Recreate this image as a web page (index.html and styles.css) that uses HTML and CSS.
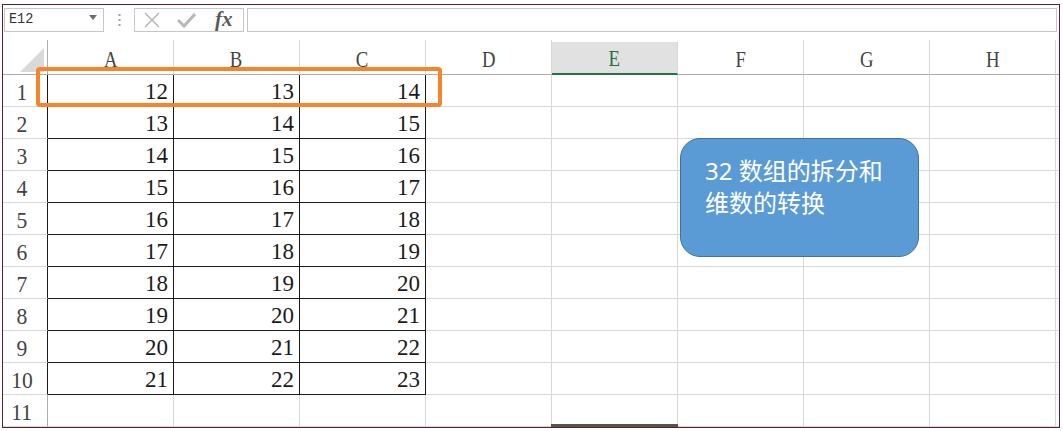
FILE: index.html
```html
<!DOCTYPE html>
<html>
<head>
<meta charset="utf-8">
<link rel="stylesheet" href="styles.css">
</head>
<body>
<div class="sheet">
  <div class="fbar">
    <div class="namebox"><span class="nametext">E12</span><svg class="arrow" width="8" height="5" viewBox="0 0 8 5"><path d="M0 0H8L4 5Z" fill="#6d6d6d"/></svg></div>
    <div class="sep"><svg width="3" height="12" viewBox="0 0 3 12"><rect x="0.5" y="0" width="2" height="2" fill="#a0a0a0"/><rect x="0.5" y="5" width="2" height="2" fill="#a0a0a0"/><rect x="0.5" y="10" width="2" height="2" fill="#a0a0a0"/></svg></div>
    <div class="btns">
      <svg width="18" height="18" viewBox="0 0 18 18"><path d="M2 2L16 16M16 2L2 16" stroke="#b8b8b8" stroke-width="1.6" fill="none"/></svg>
      <svg width="19" height="18" viewBox="0 0 19 18"><path d="M1 9L7 15L18 3" stroke="#b8b8b8" stroke-width="3" fill="none"/></svg>
      <span class="fx">fx</span>
    </div>
    <div class="finput"></div>
  </div>
  <div class="grid">
    <div class="hc corner"><svg width="26" height="26" viewBox="0 0 26 26"><path d="M25 1V25H1Z" fill="#d9d9d9"/></svg></div>
    <div class="hc"><span class="hl">A</span></div>
    <div class="hc"><span class="hl">B</span></div>
    <div class="hc"><span class="hl">C</span></div>
    <div class="hc"><span class="hl">D</span></div>
    <div class="hc sel"><span class="hl">E</span></div>
    <div class="hc"><span class="hl">F</span></div>
    <div class="hc"><span class="hl">G</span></div>
    <div class="hc"><span class="hl">H</span></div>
    <div class="hc fill"></div>

    <div class="rh b"><span class="rn">1</span></div><div class="c d">12</div><div class="c d">13</div><div class="c d">14</div><div class="c"></div><div class="c"></div><div class="c"></div><div class="c"></div><div class="c"></div><div class="c fill"></div>
    <div class="rh b"><span class="rn">2</span></div><div class="c d">13</div><div class="c d">14</div><div class="c d">15</div><div class="c"></div><div class="c"></div><div class="c"></div><div class="c"></div><div class="c"></div><div class="c fill"></div>
    <div class="rh b"><span class="rn">3</span></div><div class="c d">14</div><div class="c d">15</div><div class="c d">16</div><div class="c"></div><div class="c"></div><div class="c"></div><div class="c"></div><div class="c"></div><div class="c fill"></div>
    <div class="rh b"><span class="rn">4</span></div><div class="c d">15</div><div class="c d">16</div><div class="c d">17</div><div class="c"></div><div class="c"></div><div class="c"></div><div class="c"></div><div class="c"></div><div class="c fill"></div>
    <div class="rh b"><span class="rn">5</span></div><div class="c d">16</div><div class="c d">17</div><div class="c d">18</div><div class="c"></div><div class="c"></div><div class="c"></div><div class="c"></div><div class="c"></div><div class="c fill"></div>
    <div class="rh b"><span class="rn">6</span></div><div class="c d">17</div><div class="c d">18</div><div class="c d">19</div><div class="c"></div><div class="c"></div><div class="c"></div><div class="c"></div><div class="c"></div><div class="c fill"></div>
    <div class="rh b"><span class="rn">7</span></div><div class="c d">18</div><div class="c d">19</div><div class="c d">20</div><div class="c"></div><div class="c"></div><div class="c"></div><div class="c"></div><div class="c"></div><div class="c fill"></div>
    <div class="rh b"><span class="rn">8</span></div><div class="c d">19</div><div class="c d">20</div><div class="c d">21</div><div class="c"></div><div class="c"></div><div class="c"></div><div class="c"></div><div class="c"></div><div class="c fill"></div>
    <div class="rh b"><span class="rn">9</span></div><div class="c d">20</div><div class="c d">21</div><div class="c d">22</div><div class="c"></div><div class="c"></div><div class="c"></div><div class="c"></div><div class="c"></div><div class="c fill"></div>
    <div class="rh b"><span class="rn">10</span></div><div class="c d">21</div><div class="c d">22</div><div class="c d">23</div><div class="c"></div><div class="c"></div><div class="c"></div><div class="c"></div><div class="c"></div><div class="c fill"></div>
    <div class="rh"><span class="rn">11</span></div><div class="c"></div><div class="c"></div><div class="c"></div><div class="c"></div><div class="c"></div><div class="c"></div><div class="c"></div><div class="c"></div><div class="c fill"></div>
  </div>
  <div class="hilite"></div>
  <div class="callout">32 数组的拆分和<br>维数的转换</div>
  <div class="selbar"></div>
</div>
</body>
</html>
```
FILE: styles.css
```css
html, body { margin: 0; padding: 0; background: #ffffff; }
body { width: 1063px; height: 431px; overflow: hidden; }

.sheet {
  position: relative;
  margin: 4px 0 0 2px;
  width: 1056px;
  height: 422px;
  border: 1px solid #6a1a2a;
  overflow: hidden;
  background: #fff;
}

.fbar {
  height: 35px;
  box-sizing: border-box;
  padding: 3px 2px 0 1px;
  display: flex;
  align-items: flex-start;
}
.namebox {
  width: 100px;
  height: 24px;
  box-sizing: border-box;
  border: 1px solid #c6c6c6;
  display: flex;
  align-items: center;
  justify-content: space-between;
  padding: 0 6px 1px 4px;
}
.nametext {
  font-family: "Liberation Mono", monospace;
  font-size: 15px;
  color: #333;
  display: inline-block;
  transform: scaleX(0.9);
  transform-origin: left center;
}
.arrow { margin-bottom: 4px; }
.sep {
  width: 30px;
  height: 24px;
  display: flex;
  align-items: center;
  justify-content: center;
}
.btns {
  width: 110px;
  height: 24px;
  box-sizing: border-box;
  border: 1px solid #c6c6c6;
  display: flex;
  align-items: center;
  gap: 18px;
  padding-left: 8px;
}
.btns svg { flex: none; }
.btns svg:nth-child(2) { margin-left: -2px; }
.fx {
  font-family: "Liberation Serif", serif;
  font-style: italic;
  font-weight: bold;
  font-size: 21px;
  color: #5a5a5a;
  margin-left: 1px;
  margin-top: -2px;
}
.finput {
  flex: 1;
  height: 24px;
  box-sizing: border-box;
  border: 1px solid #c6c6c6;
  margin-left: 3px;
}

.grid {
  display: grid;
  grid-template-columns: 45px repeat(8, 126px) 1fr;
  grid-template-rows: 35px repeat(11, 32px);
}
.hc {
  box-sizing: border-box;
  border-right: 1px solid #d8d8d8;
  border-bottom: 1px solid #ababab;
  display: flex;
  align-items: center;
  justify-content: center;
  padding-top: 4px;
}
.hc.corner {
  align-items: flex-end;
  justify-content: flex-end;
  padding: 0 2px 1px 0;
  border-right-color: #ababab;
}
.hc.fill { border-right: none; }
.hl {
  font-family: "Liberation Serif", serif;
  font-size: 24px;
  color: #444;
  display: inline-block;
  transform: scaleX(0.78);
}
.hc.sel {
  background: #e1e1e1;
  border-bottom: 2px solid #217346;
  margin-top: 2px;
  padding-top: 2px;
}
.hc.sel .hl { color: #217346; }

.rh {
  box-sizing: border-box;
  border-right: 1px solid #ababab;
  border-bottom: 1px solid #d8d8d8;
  display: flex;
  align-items: center;
  justify-content: center;
  padding: 3px 6px 0 0;
}
.rh.b { border-right-color: #1a1a1a; }
.rn {
  font-family: "Liberation Serif", serif;
  font-size: 24px;
  color: #444;
  display: inline-block;
  transform: scaleX(0.9);
}

.c {
  box-sizing: border-box;
  border-right: 1px solid #d8d8d8;
  border-bottom: 1px solid #d8d8d8;
}
.c.fill { border-right: none; }
.c.d {
  border-right-color: #1a1a1a;
  border-bottom-color: #1a1a1a;
  font-family: "Liberation Serif", serif;
  font-size: 23px;
  color: #1a1a1a;
  text-align: right;
  padding: 3px 5px 0 0;
  line-height: 28px;
}

.hilite {
  position: absolute;
  left: 33px;
  top: 62px;
  width: 398px;
  height: 32px;
  border: 4px solid #f5842c;
  border-radius: 4px;
}
.callout {
  position: absolute;
  left: 677px;
  top: 133px;
  width: 239px;
  height: 119px;
  box-sizing: border-box;
  background: #5b9bd5;
  border: 1.5px solid #41719c;
  border-radius: 20px;
  padding: 16px 0 0 24px;
  font-family: "Noto Sans", "Noto Sans CJK SC", sans-serif;
  font-size: 24px;
  line-height: 32px;
  color: #ffffff;
}
.selbar {
  position: absolute;
  left: 548px;
  top: 419px;
  width: 127px;
  height: 3px;
  background: #4c5a4a;
}
```
